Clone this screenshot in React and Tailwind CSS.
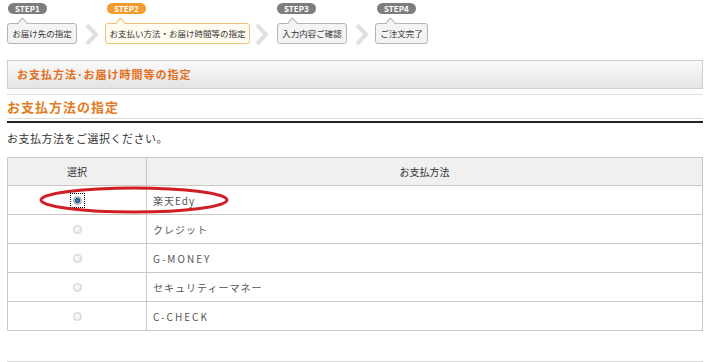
import React from "react";

const font = { fontFamily: '"Noto Sans CJK JP", "Noto Sans", sans-serif' };

function Step({ label, text, active, w, pl = "ml-[1px]" }) {
  return (
    <div className="flex flex-col items-start">
      <div
        className={`${pl} h-[11px] px-[7px] rounded-full text-[8px] leading-[11px] font-bold text-white ${
          active ? "bg-[#f39b2d]" : "bg-[#7d7d7d]"
        }`}
      >
        {label}
      </div>
      <div className="relative mt-[9px]">
        <div
          className={`absolute left-[12px] -top-[4px] w-[7px] h-[7px] rotate-45 border-l border-t ${
            active ? "bg-[#fffbf0] border-[#f0c277]" : "bg-[#f4f4f4] border-[#b5b5b5]"
          }`}
        />
        <div
          className={`${w} h-[21px] rounded-[3px] border text-[8.5px] leading-[19px] text-center text-[#333] whitespace-nowrap ${
            active ? "bg-[#fffbf0] border-[#f0c277]" : "bg-[#f4f4f4] border-[#b5b5b5]"
          }`}
        >
          {text}
        </div>
      </div>
    </div>
  );
}

function Chevron({ ml, mr }) {
  return (
    <svg width="13" height="21" viewBox="0 0 13 21" className={`mt-[21px] ${ml} ${mr}`}>
      <polyline points="2,1 11,10.5 2,20" fill="none" stroke="#e0e0e0" strokeWidth="4" />
    </svg>
  );
}

function Radio({ checked }) {
  if (checked) {
    return (
      <span className="inline-flex items-center justify-center w-[13px] h-[13px] outline-1 outline-dotted outline-black">
        <span className="w-[9px] h-[9px] rounded-full bg-[radial-gradient(circle,#5a93c0_0%,#1f4f7a_45%,#b8c8d6_60%,#e6e6e6_100%)] border border-[#9aa]" />
      </span>
    );
  }
  return (
    <span className="inline-block w-[9px] h-[9px] rounded-full border border-[#cfcfcf] bg-[radial-gradient(circle_at_40%_40%,#fcfcfc_0%,#e2e2e2_100%)]" />
  );
}

const rows = [
  { name: "楽天Edy", checked: true, sp: false },
  { name: "クレジット", sp: false },
  { name: "G-MONEY", sp: true },
  { name: "セキュリティーマネー", sp: false },
  { name: "C-CHECK", sp: true },
];

export default function App() {
  return (
    <div className="w-[709px] h-[362px] bg-white overflow-hidden pl-[7px] pr-[6px]" style={font}>
      <div className="flex items-start pt-[3px] h-[45px]">
        <Step label="STEP1" text="お届け先の指定" w="w-[70px]" />
        <Chevron ml="ml-[8px]" mr="mr-[7px]" />
        <Step label="STEP2" text="お支払い方法・お届け時間等の指定" active w="w-[145px]" pl="ml-[2px]" />
        <Chevron ml="ml-[5px]" mr="mr-[9px]" />
        <Step label="STEP3" text="入力内容ご確認" w="w-[70px]" pl="ml-0" />
        <Chevron ml="ml-[8px]" mr="mr-[7px]" />
        <Step label="STEP4" text="ご注文完了" w="w-[53px]" pl="ml-[2px]" />
      </div>

      <div className="mt-[15px] h-[29px] border border-[#cfcfcf] bg-gradient-to-b from-[#fafafa] to-[#e4e4e4] flex items-center pl-[9px]">
        <span className="text-[11px] font-bold text-[#e46f1c] tracking-[1px]">お支払方法･お届け時間等の指定</span>
      </div>

      <div className="mt-[5px] border-t border-[#dcdcdc]" />
      <div className="h-[23px] flex items-center">
        <span className="text-[13px] font-bold text-[#e27b22] tracking-[1px]">お支払方法の指定</span>
      </div>
      <div className="border-t border-[#dcdcdc]" />
      <div className="mt-[2px] border-t-2 border-[#222]" />

      <div className="mt-[7px] text-[11px] text-[#333] tracking-[0.5px] leading-[16px]">お支払方法をご選択ください。</div>

      <div className="relative mt-[11px] border border-[#c8c8c8]">
        <div className="flex h-[28px] bg-[#f0f0f0] border-b border-[#c8c8c8] text-[10px] text-[#333]">
          <div className="w-[139px] border-r border-[#c8c8c8] flex items-center justify-center">選択</div>
          <div className="flex-1 flex items-center justify-center">お支払方法</div>
        </div>
        {rows.map((r, i) => (
          <div
            key={r.name}
            className={`flex text-[10px] text-[#555] ${i < rows.length - 1 ? "h-[29px] border-b border-[#c8c8c8]" : "h-[28px]"}`}
          >
            <div className="w-[139px] border-r border-[#c8c8c8] flex items-center justify-center">
              <Radio checked={r.checked} />
            </div>
            <div className={`flex-1 flex items-center pl-[6px] ${r.sp ? "tracking-[2px]" : "tracking-[1px]"}`}>{r.name}</div>
          </div>
        ))}
        <svg className="absolute left-[30px] top-[27px] pointer-events-none" width="192" height="30" viewBox="0 0 192 30">
          <ellipse cx="96" cy="15" rx="93" ry="12" fill="none" stroke="#d01f25" strokeWidth="3" />
        </svg>
      </div>

      <div className="mt-[30px] border-t border-[#d8d8d8]" />
    </div>
  );
}
